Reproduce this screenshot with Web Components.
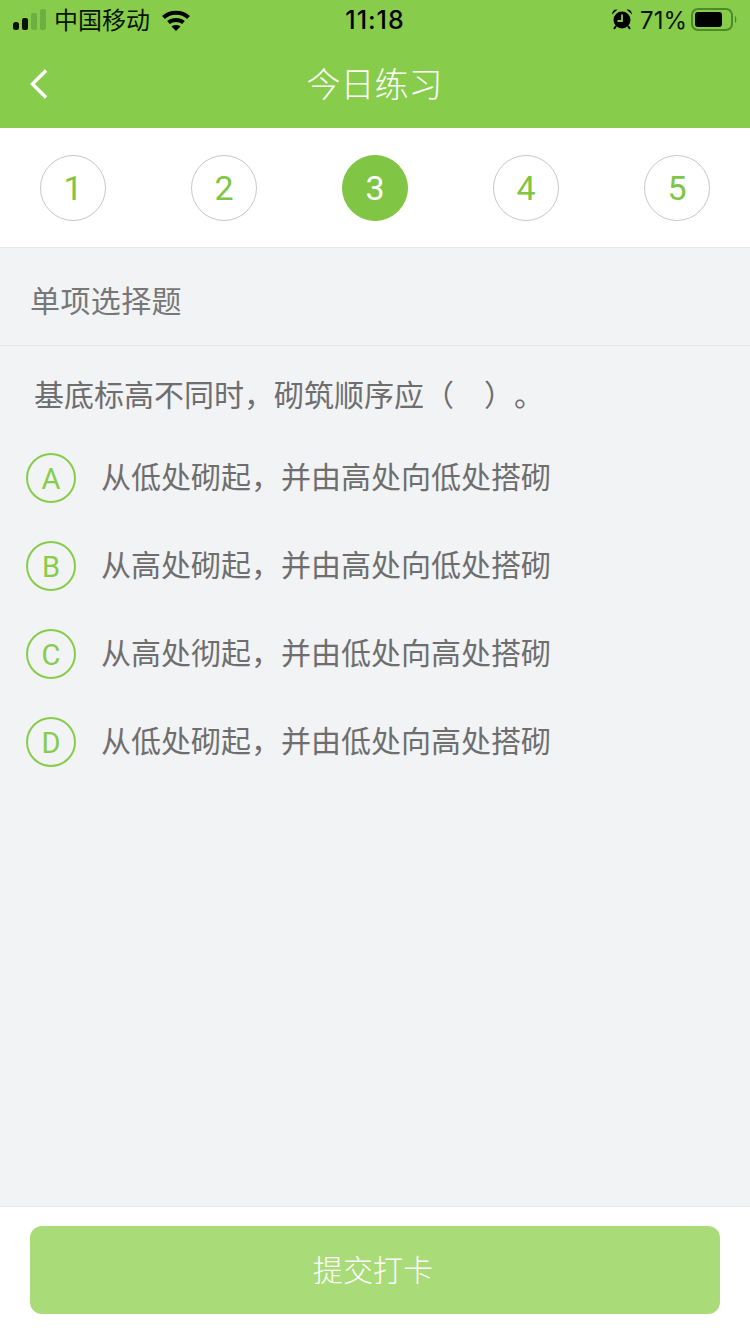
<!DOCTYPE html>
<html lang="zh">
<head>
<meta charset="utf-8">
<title>今日练习</title>
<style>
html, body { margin: 0; padding: 0; height: 100%; }
body {
  font-family: "Roboto", "Noto Sans CJK SC", sans-serif;
  background: #f2f3f5;
  display: flex;
  flex-direction: column;
  height: 1334px;
  overflow: hidden;
}
</style>
</head>
<body>
<app-header heading="今日练习"></app-header>
<step-bar count="5" current="3"></step-bar>
<section-title>单项选择题</section-title>
<question-card>
  <span slot="question">基底标高不同时，砌筑顺序应（&nbsp;&nbsp;&nbsp;&nbsp;）。</span>
  <answer-option letter="A">从低处砌起，并由高处向低处搭砌</answer-option>
  <answer-option letter="B">从高处砌起，并由高处向低处搭砌</answer-option>
  <answer-option letter="C">从高处彻起，并由低处向高处搭砌</answer-option>
  <answer-option letter="D">从低处砌起，并由低处向高处搭砌</answer-option>
</question-card>
<submit-bar>提交打卡</submit-bar>

<script>
const headerTemplate = document.createElement('template');
headerTemplate.innerHTML = `
<style>
:host { display: block; background: #87cd4b; height: 128px; flex: none; }
.status {
  height: 40px;
  display: grid;
  grid-template-columns: 1fr auto 1fr;
  align-items: center;
  color: #0a1404;
  font-size: 24px;
  font-family: "Inter", "Noto Sans CJK SC", sans-serif;
}
.left, .right { display: flex; align-items: center; }
.left { padding-left: 13px; }
.carrier { margin: -3px 0 0 7px; font-family: "Noto Sans CJK SC", sans-serif; }
.wifi { margin-left: 11px; }
.time { font-weight: 500; font-size: 25px; letter-spacing: 1px; color: #000; }
.right { justify-content: flex-end; padding-right: 11px; }
.pct { margin: 0 4px 0 7px; font-size: 24px; }
.nav {
  height: 88px;
  display: grid;
  grid-template-columns: 1fr auto 1fr;
  align-items: center;
}
.back { padding-left: 29px; display: flex; }
h1 {
  margin: -2px 1px 0 0;
  font-size: 34px;
  line-height: 44px;
  font-weight: 300;
  color: #fff;
  font-family: "Noto Sans CJK SC", sans-serif;
}
</style>
<div class="status">
  <div class="left">
    <svg width="34" height="24" viewBox="0 0 34 24">
      <rect x="0" y="14" width="6" height="8" rx="2.500" fill="#0a1404"/>
      <rect x="9" y="10" width="6" height="12" rx="2" fill="#0a1404"/>
      <rect x="18" y="5" width="6" height="17" rx="2" fill="#6fae42"/>
      <rect x="27" y="1" width="6" height="21" rx="2" fill="#6fae42"/>
    </svg>
    <span class="carrier">中国移动</span>
    <svg class="wifi" width="30" height="24" viewBox="0 0 30 24">
      <path d="M2.500 9.500C9 3 21 3 27.500 9.500" fill="none" stroke="#000" stroke-width="4"/>
      <path d="M7.500 14.500C11.500 11 18.500 11 22.500 14.500" fill="none" stroke="#000" stroke-width="4"/>
      <path d="M10.500 18.500c2.500-2 6.500-2 9 0L15 23z" fill="#000"/>
    </svg>
  </div>
  <div class="time">11:18</div>
  <div class="right">
    <svg width="22" height="24" viewBox="0 0 22 24">
      <circle cx="11" cy="12" r="8.500" fill="#000"/>
      <path d="M1 6.500C1 3 3.500 1 6.500 1.500zM21 6.500C21 3 18.500 1 15.500 1.500z" fill="#000"/>
      <path d="M5 18l-2 3M17 18l2 3" stroke="#000" stroke-width="2"/>
      <path d="M11 6.500V13H6.500" stroke="#87cd4b" stroke-width="1.800" fill="none"/>
    </svg>
    <span class="pct">71%</span>
    <svg width="48" height="24" viewBox="0 0 48 24">
      <rect x="1" y="1" width="40" height="21" rx="6" fill="none" stroke="#4c8a2a" stroke-width="2"/>
      <rect x="4" y="4" width="27" height="15" rx="3" fill="#000"/>
      <path d="M44 8c1.800.8 1.800 6.200 0 7z" fill="#4c8a2a"/>
    </svg>
  </div>
</div>
<div class="nav">
  <div class="back">
    <svg width="20" height="32" viewBox="0 0 20 32">
      <path d="M17 2.500 3.500 16 17 29.500" fill="none" stroke="#fff" stroke-width="3.500"/>
    </svg>
  </div>
  <h1></h1>
  <div></div>
</div>`;

class AppHeader extends HTMLElement {
  constructor() {
    super();
    this.attachShadow({ mode: 'open' });
    this.shadowRoot.appendChild(headerTemplate.content.cloneNode(true));
    this.shadowRoot.querySelector('h1').innerText = this.getAttribute('heading');
  }
}
customElements.define('app-header', AppHeader);

const stepsTemplate = document.createElement('template');
stepsTemplate.innerHTML = `
<style>
:host {
  display: flex;
  flex: none;
  justify-content: space-between;
  align-items: center;
  box-sizing: border-box;
  height: 120px;
  padding: 0 40px;
  background: #fff;
  border-bottom: 1px solid #e6e6e6;
}
.step {
  box-sizing: border-box;
  width: 66px;
  height: 66px;
  border-radius: 50%;
  border: 1px solid #c8c8c8;
  display: flex;
  align-items: center;
  justify-content: center;
  font-size: 34px;
  color: #80c544;
}
.step.on { background: #80c544; border-color: #80c544; color: #fff; }
</style>`;

class StepBar extends HTMLElement {
  constructor() {
    super();
    this.attachShadow({ mode: 'open' });
    this.shadowRoot.appendChild(stepsTemplate.content.cloneNode(true));
    const count = Number(this.getAttribute('count'));
    const current = Number(this.getAttribute('current'));
    for (let i = 1; i <= count; i++) {
      const step = document.createElement('div');
      step.className = i === current ? 'step on' : 'step';
      step.textContent = i;
      this.shadowRoot.appendChild(step);
    }
  }
}
customElements.define('step-bar', StepBar);

const titleTemplate = document.createElement('template');
titleTemplate.innerHTML = `
<style>
:host {
  display: flex;
  flex: none;
  align-items: center;
  box-sizing: border-box;
  height: 98px;
  padding: 4px 30px 0;
  font-size: 30px;
  letter-spacing: .4px;
  color: #777;
  border-bottom: 1px solid #e6e7e9;
  font-family: "Noto Sans CJK SC", sans-serif;
}
</style>
<slot></slot>`;

class SectionTitle extends HTMLElement {
  constructor() {
    super();
    this.attachShadow({ mode: 'open' });
    this.shadowRoot.appendChild(titleTemplate.content.cloneNode(true));
  }
}
customElements.define('section-title', SectionTitle);

const cardTemplate = document.createElement('template');
cardTemplate.innerHTML = `
<style>
:host { display: block; flex: 1; padding: 25px 26px 0; }
.question {
  font-size: 30px;
  line-height: 44px;
  color: #6e6e6e;
  padding-left: 8px;
  margin-bottom: 38px;
  font-family: "Noto Sans CJK SC", sans-serif;
  text-spacing-trim: space-all;
  word-spacing: .8px;
}
.options { display: flex; flex-direction: column; gap: 38px; }
</style>
<div class="question"><slot name="question"></slot></div>
<div class="options"><slot></slot></div>`;

class QuestionCard extends HTMLElement {
  constructor() {
    super();
    this.attachShadow({ mode: 'open' });
    this.shadowRoot.appendChild(cardTemplate.content.cloneNode(true));
  }
}
customElements.define('question-card', QuestionCard);

const optionTemplate = document.createElement('template');
optionTemplate.innerHTML = `
<style>
:host { display: flex; align-items: center; height: 50px; gap: 26px; }
.letter {
  box-sizing: border-box;
  width: 50px;
  height: 50px;
  flex: none;
  border-radius: 50%;
  border: 2px solid #87cd4b;
  padding-top: 2px;
  display: flex;
  align-items: center;
  justify-content: center;
  color: #87cd4b;
  font-size: 29px;
}
.text {
  font-size: 30px;
  color: #6e6e6e;
  margin: -6px 0 0 -1px;
  font-family: "Noto Sans CJK SC", sans-serif;
}
</style>
<div class="letter"></div>
<div class="text"><slot></slot></div>`;

class AnswerOption extends HTMLElement {
  constructor() {
    super();
    this.attachShadow({ mode: 'open' });
    this.shadowRoot.appendChild(optionTemplate.content.cloneNode(true));
    this.shadowRoot.querySelector('.letter').textContent = this.getAttribute('letter');
  }
}
customElements.define('answer-option', AnswerOption);

const submitTemplate = document.createElement('template');
submitTemplate.innerHTML = `
<style>
:host {
  display: block;
  flex: none;
  box-sizing: border-box;
  height: 128px;
  padding: 19px 30px 0;
  background: #fff;
  border-top: 1px solid #e6e7e9;
}
button {
  display: block;
  width: 100%;
  height: 88px;
  border: 0;
  border-radius: 12px;
  padding: 0 4px 4px 0;
  background: #a9dc78;
  color: #fff;
  font-size: 30px;
  font-family: "Noto Sans CJK SC", sans-serif;
  font-weight: 300;
}
</style>
<button><slot></slot></button>`;

class SubmitBar extends HTMLElement {
  constructor() {
    super();
    this.attachShadow({ mode: 'open' });
    this.shadowRoot.appendChild(submitTemplate.content.cloneNode(true));
  }
}
customElements.define('submit-bar', SubmitBar);
</script>
</body>
</html>
